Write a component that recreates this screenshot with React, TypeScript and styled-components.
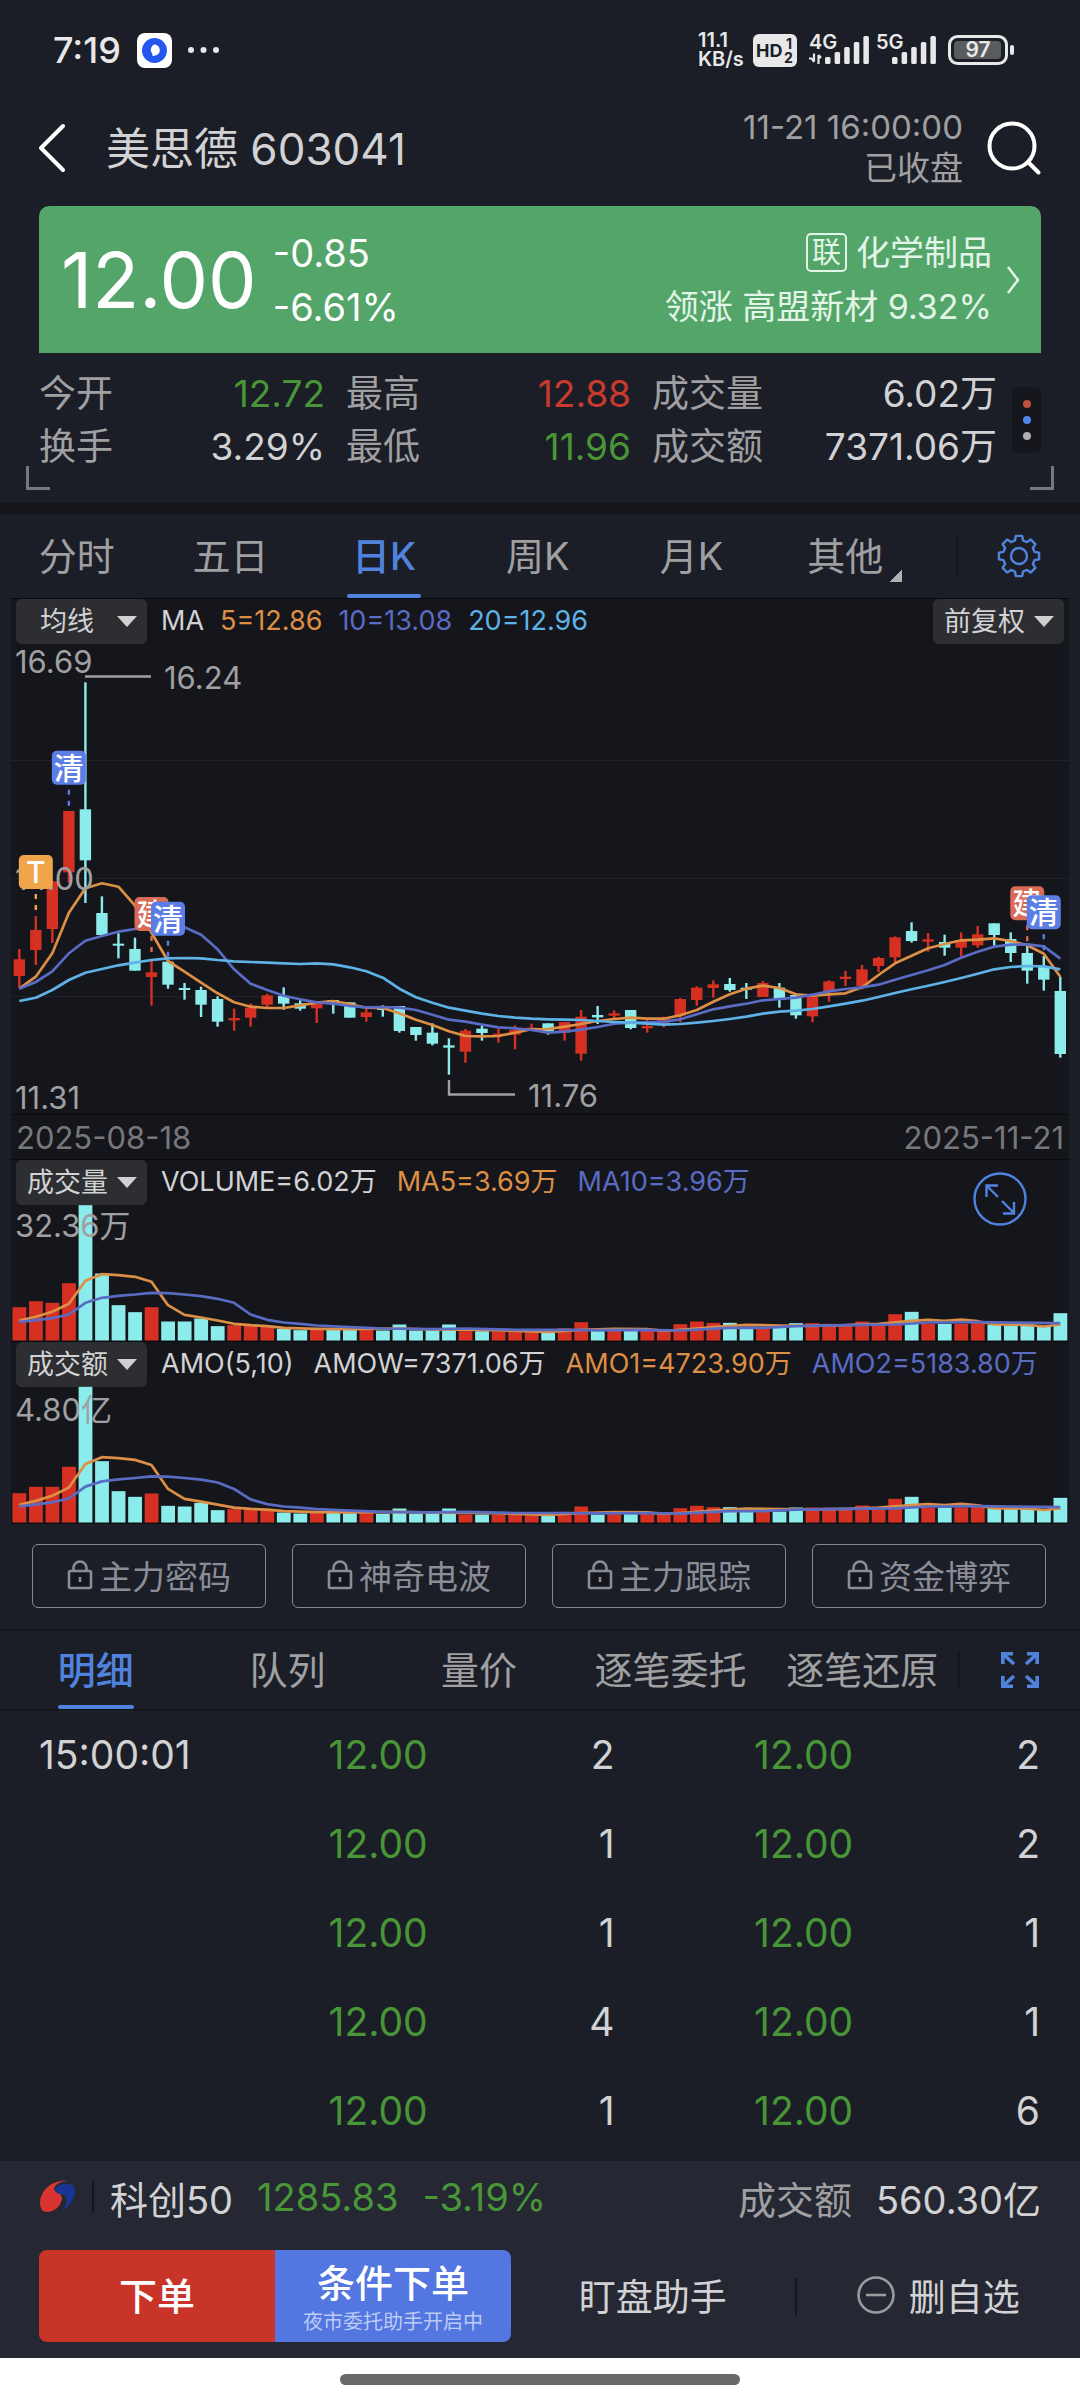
import React from "react";
import styled, { createGlobalStyle } from "styled-components";

const color = {
  page: "#1b1e26",
  panel: "#15161b",
  line: "#121318",
  text: "#d2d2d4",
  label: "#a0a0a3",
  dim: "#77787b",
  green: "#489637",
  red: "#c93a2e",
  blue: "#5083de",
  up: "#d63022",
  down: "#8cecec",
  ma5: "#dd8f45",
  ma10: "#5a6bc4",
  ma20: "#5fb2e6",
};

const fonts = `Inter, "Noto Sans CJK SC", sans-serif`;

const GlobalStyle = createGlobalStyle`
  * { box-sizing: border-box; }
  body { margin: 0; background: ${color.page}; }
  button, select { font: inherit; color: inherit; background: none; border: 0; padding: 0; margin: 0; }
  svg { display: block; flex: none; overflow: visible; }
`;

const Screen = styled.div`
  background: ${color.page};
  color: ${color.text};
  font-family: ${fonts};
  font-size: 37px;
  white-space: nowrap;
`;

/* ---------- status bar ---------- */

const StatusBar = styled.div`
  display: flex;
  align-items: center;
  justify-content: space-between;
  height: 100px;
  padding: 0 65px 0 53px;
  color: #e8e8e8;
`;

const StatusGroup = styled.div<{ $gap: number }>`
  display: flex;
  align-items: center;
  gap: ${(p) => p.$gap}px;
`;

const Clock = styled.span`
  font-size: 36px;
  font-weight: 500;
`;

const NetSpeed = styled.span`
  font-size: 20px;
  line-height: 19px;
  font-weight: 600;
  width: 48px;
`;

/* ---------- header ---------- */

const Header = styled.header`
  display: flex;
  align-items: center;
  height: 106px;
  padding: 0 39px 10px;
`;

const IconButton = styled.button`
  display: flex;
  align-items: center;
  justify-content: center;
  cursor: pointer;
`;

const Title = styled.h1`
  flex: 1;
  margin: 0 0 0 39px;
  padding-bottom: 4px;
  font-size: 44px;
  font-weight: 400;
`;

const MarketState = styled.div`
  margin-right: 24px;
  font-size: 33px;
  line-height: 41px;
  text-align: right;
  color: ${color.label};
`;

/* ---------- quote card ---------- */

const Quote = styled.section`
  display: flex;
  align-items: center;
  height: 147px;
  margin: 0 39px;
  padding: 0 21px 0 22px;
  border-radius: 10px 10px 0 0;
  background: #53a56a;
  color: #fff;
`;

const Price = styled.strong`
  font-size: 77px;
  font-weight: 400;
`;

const Change = styled.div`
  flex: 1;
  margin-left: 16px;
  font-size: 38px;
  line-height: 54px;
`;

const Sector = styled.a`
  display: flex;
  align-items: center;
  gap: 14px;
  color: #e2f5e6;
  text-decoration: none;
`;

const SectorLines = styled.div`
  font-size: 34px;
  line-height: 54px;
  text-align: right;
`;

const SectorTag = styled.span`
  display: inline-block;
  margin-right: 9px;
  padding: 0 4px;
  border: 2px solid #e2f5e6;
  border-radius: 5px;
  font-size: 29px;
  line-height: 35px;
  vertical-align: 2px;
`;

/* ---------- stats ---------- */

const Stats = styled.section`
  position: relative;
  display: flex;
  align-items: center;
  padding: 14px 39px 30px;
`;

const StatGrid = styled.dl`
  flex: 1;
  display: grid;
  grid-template-columns: 286fr 285fr 345fr;
  column-gap: 21px;
  margin: 0 15px 0 0;
  line-height: 53px;
`;

const Stat = styled.div`
  display: flex;
  justify-content: space-between;
`;

const StatLabel = styled.dt`
  color: ${color.label};
`;

const StatValue = styled.dd<{ $color?: string }>`
  margin: 0;
  color: ${(p) => p.$color ?? color.text};
`;

const Dots = styled.button`
  display: flex;
  flex-direction: column;
  align-items: center;
  justify-content: center;
  gap: 8px;
  width: 29px;
  height: 66px;
  border-radius: 6px;
  background: ${color.panel};
`;

const Dot = styled.i<{ $color: string }>`
  width: 8px;
  height: 8px;
  border-radius: 50%;
  background: ${(p) => p.$color};
`;

const Corner = styled.i<{ $side: "left" | "right" }>`
  position: absolute;
  bottom: 13px;
  ${(p) => p.$side}: 26px;
  width: 24px;
  height: 24px;
  border-bottom: 3px solid #76787c;
  border-${(p) => p.$side}: 3px solid #76787c;
`;

const Divider = styled.div`
  height: 11px;
  background: ${color.panel};
`;

/* ---------- tabs ---------- */

const TabBar = styled.nav<{ $height: number; $lined?: boolean }>`
  display: flex;
  height: ${(p) => p.$height}px;
  border: 0 solid ${color.line};
  border-width: ${(p) => (p.$lined ? "1px 0" : "0")};
`;

const Tabs = styled.div<{ $end: number }>`
  flex: 1;
  display: flex;
  padding-right: ${(p) => p.$end}px;
`;

const Tab = styled.button<{ $active?: boolean }>`
  flex: 1 1 0;
  display: flex;
  justify-content: center;
  font-size: 38px;
  font-weight: ${(p) => (p.$active ? 500 : 400)};
  color: ${(p) => (p.$active ? color.blue : color.label)};
  cursor: pointer;
`;

const TabLabel = styled.span<{ $active?: boolean }>`
  position: relative;
  display: flex;
  align-items: center;
  justify-content: center;
  height: 100%;
  min-width: 74px;
  padding-bottom: 5px;
  &::after {
    content: "";
    position: absolute;
    inset: auto 0 0;
    height: 4px;
    border-radius: 2px;
    background: ${(p) => (p.$active ? color.blue : "transparent")};
  }
`;

const MoreMark = styled.i`
  position: absolute;
  left: 100%;
  bottom: 16px;
  margin-left: 6px;
  width: 13px;
  height: 13px;
  background: linear-gradient(135deg, transparent 50%, #b0b0b2 50%);
`;

const TabAction = styled.div`
  display: flex;
  align-items: center;
  gap: 39px;
  padding-right: 39px;
`;

const Rule = styled.i<{ $height: number }>`
  width: 2px;
  height: ${(p) => p.$height}px;
  background: #14161b;
`;

/* ---------- charts ---------- */

const ChartPanel = styled.section`
  margin: 0 11px;
  border-bottom: 1px solid #0e0f12;
  background: ${color.panel};
`;

const Pane = styled.div`
  position: relative;
  border-top: 1px solid #0a0b0d;
`;

const IndicatorBar = styled.div`
  display: flex;
  align-items: center;
  height: 44px;
  padding: 0 5px;
  font-size: 27px;
`;

const Picker = styled.label`
  display: grid;
  align-items: center;
  width: 131px;
  height: 45px;
  border-radius: 6px;
  background: #2d2e32;
  & > * { grid-area: 1 / 1; }
`;

const PickerSelect = styled.select<{ $pad: number }>`
  appearance: none;
  width: 100%;
  height: 45px;
  padding-left: ${(p) => p.$pad}px;
  font-size: 27px;
  outline: none;
`;

const PickerArrow = styled.i<{ $inset: number }>`
  justify-self: end;
  margin-right: ${(p) => p.$inset}px;
  border: 10px solid transparent;
  border-width: 11px 10px 0;
  border-top-color: #d0d0d0;
  pointer-events: none;
`;

const Readings = styled.div<{ $gap: number }>`
  flex: 1;
  display: flex;
  align-items: baseline;
  gap: ${(p) => p.$gap}px;
  margin-left: 14px;
  line-height: 44px;
`;

const Reading = styled.span<{ $color?: string }>`
  color: ${(p) => p.$color ?? color.text};
`;

const Plot = styled.svg`
  width: 100%;
  height: auto;
  font-size: 31px;
  font-family: ${fonts};
`;

const DateRow = styled.div`
  display: flex;
  justify-content: space-between;
  height: 45px;
  padding: 0 5px;
  border-top: 1px solid #0a0b0d;
  font-size: 31px;
  line-height: 46px;
  color: ${color.dim};
`;

const ExpandButton = styled(IconButton)`
  position: absolute;
  top: 12px;
  right: 42px;
`;

/* ---------- locked features ---------- */

const LockedRow = styled.div`
  display: grid;
  grid-template-columns: repeat(4, 1fr);
  gap: 26px;
  padding: 20px 34px 21px 32px;
`;

const LockedButton = styled.button`
  display: flex;
  align-items: center;
  justify-content: center;
  gap: 6px;
  height: 64px;
  padding-bottom: 2px;
  border: 1px solid #868894;
  border-radius: 6px;
  font-size: 33px;
  color: #8a8c98;
`;

/* ---------- trades ---------- */

const Trades = styled.table`
  width: 100%;
  margin-bottom: 6px;
  border-collapse: collapse;
  table-layout: fixed;
  font-size: 39px;
  td {
    height: 89px;
    padding: 0;
    text-align: right;
  }
  td:first-child {
    padding-left: 39px;
    text-align: left;
  }
  td:last-child {
    padding-right: 40px;
  }
`;

const PriceCell = styled.td`
  color: ${color.green};
`;

/* ---------- footer ---------- */

const Footer = styled.footer`
  padding-bottom: 16px;
  background: #252833;
`;

const IndexRow = styled.div`
  display: flex;
  align-items: center;
  gap: 16px;
  height: 74px;
  padding: 0 39px 2px;
  font-size: 38px;
`;

const IndexChange = styled.span`
  margin-left: 8px;
  color: ${color.green};
`;

const Turnover = styled.span`
  margin: 0 8px 0 auto;
  color: ${color.label};
`;

const Actions = styled.div`
  display: flex;
  align-items: center;
  height: 92px;
  margin: 15px 0 0 39px;
`;

const OrderGroup = styled.div`
  display: flex;
  width: 472px;
  height: 92px;
  border-radius: 8px;
  overflow: hidden;
`;

const OrderButton = styled.button<{ $fill: string }>`
  flex: 1;
  background: ${(p) => p.$fill};
  color: #fff;
  font-size: 38px;
  line-height: 52px;
  font-weight: 500;
`;

const OrderNote = styled.small`
  display: block;
  font-size: 20px;
  line-height: 26px;
  font-weight: 400;
  color: #bccbf5;
`;

const FooterButton = styled.button`
  flex: 1 1 0;
  display: flex;
  align-items: center;
  justify-content: center;
  gap: 14px;
  height: 100%;
  padding-bottom: 3px;
  font-size: 37px;
`;

const HomeArea = styled.div`
  display: flex;
  justify-content: center;
  padding: 16px 0 15px;
  background: #fff;
`;

const HomePill = styled.i`
  width: 37%;
  height: 11px;
  border-radius: 6px;
  background: #696969;
`;

/* ---------- data ---------- */

const STEP = 1041 / 63;
const cx = (i: number) => 19.3 + i * STEP;

type Candle = [up: 0 | 1, high: number, top: number, bottom: number, low: number];

const candles: Candle[] = [
  [1, 927, 958, 1008, 1042], [1, 828, 870, 930, 975], [1, 724, 724, 867, 909], [1, 513, 513, 697, 728],
  [0, 127, 508, 661, 789], [0, 769, 819, 885, 885], [0, 880, 911, 917, 955], [0, 893, 927, 992, 992],
  [1, 958, 997, 1011, 1097], [0, 965, 965, 1034, 1046], [0, 1029, 1044, 1050, 1079], [0, 1040, 1050, 1094, 1131],
  [0, 1069, 1077, 1145, 1160], [1, 1106, 1134, 1141, 1172], [1, 1090, 1103, 1133, 1160], [1, 1061, 1066, 1094, 1103],
  [0, 1042, 1068, 1091, 1109], [0, 1080, 1090, 1106, 1112], [1, 1088, 1090, 1105, 1149], [0, 1080, 1080, 1086, 1121],
  [0, 1087, 1087, 1133, 1133], [1, 1105, 1117, 1131, 1145], [0, 1096, 1104, 1110, 1130], [0, 1098, 1098, 1173, 1178],
  [0, 1161, 1161, 1185, 1202], [0, 1150, 1178, 1211, 1216], [0, 1195, 1216, 1223, 1304], [1, 1167, 1172, 1235, 1268],
  [0, 1157, 1166, 1179, 1202], [1, 1166, 1181, 1188, 1208], [1, 1156, 1170, 1184, 1228], [1, 1151, 1163, 1170, 1171],
  [0, 1150, 1150, 1173, 1184], [1, 1146, 1146, 1178, 1202], [1, 1110, 1130, 1241, 1262], [0, 1098, 1125, 1132, 1152],
  [1, 1111, 1120, 1127, 1140], [0, 1110, 1110, 1164, 1168], [1, 1135, 1158, 1165, 1178], [1, 1130, 1133, 1150, 1162],
  [1, 1074, 1077, 1126, 1147], [1, 1039, 1043, 1080, 1097], [1, 1021, 1033, 1044, 1073], [0, 1014, 1032, 1050, 1055],
  [0, 1029, 1043, 1049, 1077], [1, 1023, 1029, 1071, 1071], [0, 1029, 1043, 1080, 1103], [0, 1060, 1065, 1126, 1136],
  [1, 1070, 1070, 1129, 1147], [1, 1021, 1024, 1055, 1085], [1, 993, 1010, 1017, 1038], [1, 975, 988, 1038, 1048],
  [1, 950, 954, 978, 996], [1, 889, 892, 952, 968], [0, 847, 873, 903, 908], [1, 879, 898, 905, 935],
  [0, 884, 906, 923, 947], [1, 877, 900, 923, 950], [1, 858, 883, 916, 923], [0, 850, 850, 885, 917],
  [0, 877, 897, 939, 966], [0, 915, 939, 992, 1031], [0, 948, 981, 1019, 1052], [0, 1010, 1053, 1242, 1253],
];

const ma5 = [
  1046, 1010, 940, 818, 745, 730, 740, 797, 878, 963, 995, 1028, 1060, 1087, 1100, 1104, 1104, 1096, 1088, 1083, 1092,
  1103, 1104, 1120, 1139, 1155, 1174, 1188, 1189, 1188, 1178, 1168, 1167, 1160, 1152, 1143, 1137, 1133, 1136, 1136,
  1126, 1110, 1085, 1063, 1046, 1037, 1044, 1063, 1067, 1063, 1060, 1042, 1005, 970, 947, 925, 912, 901, 899, 895, 903,
  916, 941, 1010,
];
const ma10 = [
  1046, 1026, 994, 940, 902, 888, 875, 867, 855, 850, 862, 884, 928, 988, 1031, 1050, 1067, 1078, 1087, 1091, 1098,
  1102, 1101, 1103, 1110, 1124, 1139, 1145, 1154, 1162, 1165, 1170, 1178, 1175, 1169, 1161, 1151, 1148, 1147, 1145,
  1138, 1123, 1108, 1099, 1091, 1081, 1077, 1073, 1064, 1054, 1047, 1042, 1034, 1019, 1005, 991, 975, 953, 935, 920,
  914, 913, 919, 956,
];
const ma20 = [
  1083, 1073, 1050, 1020, 998, 987, 976, 968, 960, 955, 954, 955, 960, 964, 966, 968, 970, 972, 970, 973, 982, 994,
  1013, 1046, 1072, 1088, 1103, 1112, 1121, 1128, 1133, 1136, 1138, 1139, 1140, 1143, 1146, 1148, 1151, 1154, 1152,
  1148, 1143, 1137, 1130, 1121, 1115, 1112, 1107, 1099, 1091, 1082, 1071, 1059, 1048, 1037, 1026, 1014, 1001, 988, 981,
  978, 979, 988,
];

/* Bar heights in thirds of a pixel, measured from the base line. */
const volume = [
  100, 118, 113, 172, 406, 201, 106, 85, 100, 57, 57, 66, 43, 46, 45, 43, 35, 31, 35, 34, 32, 33, 30, 48, 30, 31, 48,
  28, 28, 27, 27, 25, 24, 37, 55, 28, 31, 29, 31, 33, 49, 57, 53, 53, 41, 38, 38, 52, 52, 50, 46, 57, 49, 79, 86, 50,
  50, 50, 53, 47, 45, 45, 44, 82,
];
const amount = volume.map((v, i) =>
  i < 13 ? [88, 107, 107, 167, 407, 184, 94, 77, 87, 50, 48, 59, 37][i] : Math.round(i > 50 ? v * 0.9 : v * 0.87)
);

type Point = [i: number, height: number];
const volumeMa5: Point[] = [
  [0, 60], [1, 71], [2, 86], [3, 110], [4, 179], [5, 199], [6, 196], [7, 191], [8, 176], [9, 106], [10, 77], [11, 69],
  [12, 60], [13, 50], [14, 46], [15, 43], [16, 38], [18, 35], [20, 34], [23, 36], [25, 33], [28, 32], [30, 29],
  [32, 26], [34, 32], [36, 35], [38, 34], [39, 29], [40, 32], [42, 40], [44, 47], [46, 45], [48, 44], [50, 46],
  [52, 50], [54, 59], [55, 62], [56, 59], [57, 63], [58, 58], [59, 48], [61, 47], [62, 42], [63, 48],
];
const volumeMa10: Point[] = [
  [0, 55], [1, 61], [2, 67], [3, 78], [4, 113], [5, 128], [6, 134], [7, 138], [8, 143], [9, 142], [10, 138], [11, 133],
  [12, 125], [13, 113], [14, 78], [15, 62], [16, 54], [17, 50], [18, 45], [20, 40], [22, 36], [25, 34], [27, 36],
  [30, 32], [33, 32], [35, 31], [38, 32], [40, 30], [43, 38], [45, 38], [47, 43], [50, 46], [53, 48], [55, 54],
  [58, 55], [60, 54], [63, 52],
];
const scaled = (points: Point[]): Point[] => points.map(([i, h]) => [i, i < 13 ? h - 8 + h / 40 : h * 0.89]);

const trades = [
  ["15:00:01", "12.00", "2", "12.00", "2"],
  ["", "12.00", "1", "12.00", "2"],
  ["", "12.00", "1", "12.00", "1"],
  ["", "12.00", "4", "12.00", "1"],
  ["", "12.00", "1", "12.00", "6"],
];

const marks = [
  { i: 1, y: 645, stem: 812, text: "T", fill: "#f0a54a" },
  { i: 3, y: 332, stem: 498, text: "清", fill: "#5b7de6" },
  { i: 8, y: 771, stem: 940, text: "建", fill: "#d96a55" },
  { i: 9, y: 785, stem: 952, text: "清", fill: "#5b7de6" },
  { i: 61, y: 739, stem: 908, text: "建", fill: "#d96a55" },
  { i: 62, y: 766, stem: 935, text: "清", fill: "#5b7de6" },
];

/* ---------- drawings ---------- */

const py = (v: number) => v / 3 - 3;

const path = (points: Point[], y: (h: number) => number) =>
  points.map(([i, h]) => `${cx(i).toFixed(1)},${y(h).toFixed(1)}`).join(" ");

const series = (values: number[]) => path(values.map((v, i): Point => [i, v]), py);

function Line({ points, stroke }: { points: string; stroke: string }) {
  return <polyline points={points} fill="none" stroke={stroke} strokeWidth={2.7} strokeLinejoin="round" />;
}

function PriceChart() {
  return (
    <Plot viewBox="11 0 1058 471" role="img" aria-label="日K">
      {[117.5, 235.5, 353.5].map((y) => (
        <line key={y} x1={11} x2={1069} y1={y} y2={y} stroke="#202227" />
      ))}
      {candles.map(([up, high, top, bottom, low], i) => (
        <g key={i} fill={up ? color.up : color.down}>
          <rect x={cx(i) - 1.2} y={py(high)} width={2.4} height={(low - high) / 3} />
          <rect x={cx(i) - 5.7} y={py(top)} width={11.4} height={(bottom - top) / 3} />
        </g>
      ))}
      <Line points={series(ma5)} stroke={color.ma5} />
      <Line points={series(ma10)} stroke={color.ma10} />
      <Line points={series(ma20)} stroke={color.ma20} />
      <g fill={color.label}>
        <text x={15} y={30}>16.69</text>
        <text x={15} y={247}>14.00</text>
        <text x={15} y={466}>11.31</text>
        <text x={164} y={46}>16.24</text>
        <text x={528} y={464}>11.76</text>
      </g>
      <path d="M85 33.5H151M449 437V451.5H515" fill="none" stroke={color.label} strokeWidth={2.4} />
      {marks.map((m) => (
        <g key={m.i}>
          <line
            x1={cx(m.i)} x2={cx(m.i)} y1={py(m.y) + 39} y2={py(m.stem)}
            stroke={m.fill} strokeWidth={2.4} strokeDasharray="5 6"
          />
          <rect x={cx(m.i) - 17} y={py(m.y)} width={34} height={34} rx={5} fill={m.fill} />
          <text x={cx(m.i)} y={py(m.y) + 28} fontSize={30} fontWeight={500} fill="#fff" textAnchor="middle">
            {m.text}
          </text>
        </g>
      ))}
    </Plot>
  );
}

function BarChart({ bars, fast, slow, peak, peakY, name }: {
  bars: number[]; fast: Point[]; slow: Point[]; peak: string; peakY: number; name: string;
}) {
  const y = (h: number) => 136.5 - h / 3;
  return (
    <Plot viewBox="11 0 1058 137" role="img" aria-label={name}>
      {bars.map((h, i) => (
        <rect
          key={i} x={cx(i) - 6.8} y={y(h)} width={13.8} height={h / 3}
          fill={candles[i][0] ? color.up : color.down}
        />
      ))}
      <Line points={path(fast, y)} stroke={color.ma5} />
      <Line points={path(slow, y)} stroke={color.ma10} />
      <text x={15} y={peakY} fill={color.label}>{peak}</text>
    </Plot>
  );
}

function Signal({ name, data }: { name: string; data?: boolean }) {
  return (
    <svg width="60" height="34" viewBox="0 0 60 34" fill="#e8e8e8">
      <text x="0" y="16" fontSize="20" fontWeight="600" fontFamily="Inter, sans-serif">{name}</text>
      {[7, 12, 17, 22, 28].map((h, i) => (
        <rect key={h} x={16 + i * 9.6} y={31 - h} width="5.5" height={h} rx="1.5" />
      ))}
      {data && <path d="M0 25.500h3.500M5 20.500v8M3 26l2 3M9.500 31v-9M9.500 22l2.500 3" stroke="#e8e8e8" strokeWidth="2.200" fill="none" />}
    </svg>
  );
}

function Lock() {
  return (
    <svg width="26" height="32" viewBox="0 0 26 32" fill="none" stroke="#8a8c98" strokeWidth="2.6">
      <rect x="2" y="12" width="22" height="17" rx="1.5" fill={color.panel} />
      <path d="M6.5 12V9a6.5 6.5 0 0 1 13 0v3M13 18v5" />
    </svg>
  );
}

function Gear() {
  const points: string[] = [];
  for (let k = 0; k < 8; k++) {
    const at = (deg: number, r: number) => {
      const a = ((k * 45 + deg) * Math.PI) / 180;
      return `${(22 + r * Math.sin(a)).toFixed(1)} ${(22 - r * Math.cos(a)).toFixed(1)}`;
    };
    points.push(at(-9, 20.3), at(9, 20.3), at(15, 16), at(30, 16));
  }
  return (
    <svg width="44" height="44" viewBox="0 0 44 44" fill="none" stroke={color.blue} strokeWidth="2.4" strokeLinejoin="round">
      <path d={`M${points.join("L")}Z`} />
      <circle cx="22" cy="22" r="8" />
    </svg>
  );
}

function Choice({ label, value, pad = 11, inset = 10 }: { label: string; value: string; pad?: number; inset?: number }) {
  return (
    <Picker>
      <PickerSelect aria-label={label} $pad={pad} defaultValue={value}>
        <option>{value}</option>
      </PickerSelect>
      <PickerArrow $inset={inset} />
    </Picker>
  );
}

const stats: [string, string, string?][] = [
  ["今开", "12.72", color.green],
  ["最高", "12.88", color.red],
  ["成交量", "6.02万"],
  ["换手", "3.29%"],
  ["最低", "11.96", color.green],
  ["成交额", "7371.06万"],
];

export default function App() {
  return (
    <Screen>
      <GlobalStyle />
      <StatusBar>
        <StatusGroup $gap={16}>
          <Clock>7:19</Clock>
          <svg width="35" height="35" viewBox="0 0 35 35">
            <rect width="35" height="35" rx="8" fill="#fff" />
            <circle cx="17.5" cy="17.5" r="12.5" fill="#2457ee" />
            <path d="M17.5 11.5a5.6 5.6 0 1 1-.6 11.2c-.6.6-1.600.6-1.600-.6v-1.500a5.600 5.600 0 0 1 2.200-9.100z" fill="#fff" />
          </svg>
          <svg width="32" height="6" viewBox="0 0 32 6" fill="#e8e8e8">
            <circle cx="3" cy="3" r="3" />
            <circle cx="15.5" cy="3" r="3" />
            <circle cx="28" cy="3" r="3" />
          </svg>
        </StatusGroup>
        <StatusGroup $gap={12}>
          <StatusGroup $gap={7}>
            <NetSpeed>11.1<br />KB/s</NetSpeed>
            <svg width="44" height="33" viewBox="0 0 44 33" fontFamily="Inter, sans-serif" fontWeight="700" fill="#1b1e26">
              <rect width="44" height="33" rx="6" fill="#e8e8e8" />
              <text x="3" y="23" fontSize="18">HD</text>
              <text x="33" y="15" fontSize="14">1</text>
              <text x="31" y="29" fontSize="14">2</text>
            </svg>
          </StatusGroup>
          <StatusGroup $gap={7}>
            <Signal name="4G" data />
            <Signal name="5G" />
          </StatusGroup>
          <svg width="67" height="30" viewBox="0 0 67 30">
            <rect x="1.5" y="1.5" width="57" height="27" rx="8" fill="none" stroke="#e8e8e8" strokeWidth="3" />
            <rect x="6" y="6" width="47" height="18" rx="4" fill="#5a5b5f" />
            <rect x="62" y="10" width="4" height="10" rx="2" fill="#e8e8e8" />
            <text x="30" y="22" fontSize="21" fontWeight="600" fontFamily="Inter, sans-serif" fill="#e8e8e8" textAnchor="middle">97</text>
          </svg>
        </StatusGroup>
      </StatusBar>

      <Header>
        <IconButton aria-label="返回">
          <svg width="28" height="50" viewBox="0 0 28 50" fill="none" stroke="#fff" strokeWidth="4" strokeLinecap="round" strokeLinejoin="round">
            <path d="M24 3L2 25l22 22" />
          </svg>
        </IconButton>
        <Title>美思德 603041</Title>
        <MarketState>11-21 16:00:00<br />已收盘</MarketState>
        <IconButton aria-label="搜索">
          <svg width="54" height="54" viewBox="0 0 54 54" fill="none" stroke="#fff" strokeWidth="4" strokeLinecap="round">
            <circle cx="25" cy="25" r="22.5" />
            <path d="M41 41l10.500 10.500" />
          </svg>
        </IconButton>
      </Header>

      <Quote>
        <Price>12.00</Price>
        <Change>-0.85<br />-6.61%</Change>
        <Sector href="#sector">
          <SectorLines>
            <SectorTag>联</SectorTag>化学制品<br />领涨 高盟新材 9.32%
          </SectorLines>
          <svg width="14" height="28" viewBox="0 0 14 28" fill="none" stroke="#e2f5e6" strokeWidth="2.5">
            <path d="M2 1l10 13L2 27" />
          </svg>
        </Sector>
      </Quote>

      <Stats>
        <StatGrid>
          {stats.map(([label, value, tint]) => (
            <Stat key={label}>
              <StatLabel>{label}</StatLabel>
              <StatValue $color={tint}>{value}</StatValue>
            </Stat>
          ))}
        </StatGrid>
        <Dots aria-label="更多数据">
          <Dot $color="#c0503c" />
          <Dot $color="#4f86ec" />
          <Dot $color="#b0b0b2" />
        </Dots>
        <Corner $side="left" />
        <Corner $side="right" />
      </Stats>
      <Divider />

      <TabBar $height={84}>
        <Tabs $end={34}>
          {["分时", "五日", "日K", "周K", "月K", "其他"].map((name) => (
            <Tab key={name} $active={name === "日K"}>
              <TabLabel $active={name === "日K"}>
                {name}
                {name === "其他" && <MoreMark />}
              </TabLabel>
            </Tab>
          ))}
        </Tabs>
        <TabAction>
          <Rule $height={38} />
          <IconButton aria-label="设置"><Gear /></IconButton>
        </TabAction>
      </TabBar>

      <ChartPanel>
        <Pane>
          <IndicatorBar>
            <Choice label="主图指标" value="均线" pad={24} />
            <Readings $gap={16}>
              <Reading>MA</Reading>
              <Reading $color={color.ma5}>5=12.86</Reading>
              <Reading $color={color.ma10}>10=13.08</Reading>
              <Reading $color={color.ma20}>20=12.96</Reading>
            </Readings>
            <Choice label="复权方式" value="前复权" />
          </IndicatorBar>
          <PriceChart />
        </Pane>
        <DateRow>
          <time>2025-08-18</time>
          <time>2025-11-21</time>
        </DateRow>
        <Pane>
          <IndicatorBar>
            <Choice label="副图指标一" value="成交量" />
            <Readings $gap={20}>
              <Reading>VOLUME=6.02万</Reading>
              <Reading $color={color.ma5}>MA5=3.69万</Reading>
              <Reading $color={color.ma10}>MA10=3.96万</Reading>
            </Readings>
          </IndicatorBar>
          <BarChart bars={volume} fast={volumeMa5} slow={volumeMa10} peak="32.36万" peakY={33} name="成交量" />
          <ExpandButton aria-label="全屏">
            <svg width="54" height="54" viewBox="0 0 54 54" fill="none" stroke={color.blue} strokeWidth="2.4">
              <circle cx="27" cy="27" r="25.5" />
              <path d="M25 25L14 14M13.5 25V13.5H25M29 29l12 12M41 30v11.5H30" />
            </svg>
          </ExpandButton>
        </Pane>
        <Pane>
          <IndicatorBar>
            <Choice label="副图指标二" value="成交额" />
            <Readings $gap={20}>
              <Reading>AMO(5,10)</Reading>
              <Reading>AMOW=7371.06万</Reading>
              <Reading $color={color.ma5}>AMO1=4723.90万</Reading>
              <Reading $color={color.ma10}>AMO2=5183.80万</Reading>
            </Readings>
          </IndicatorBar>
          <BarChart bars={amount} fast={scaled(volumeMa5)} slow={scaled(volumeMa10)} peak="4.80亿" peakY={35} name="成交额" />
        </Pane>
      </ChartPanel>

      <LockedRow>
        {["主力密码", "神奇电波", "主力跟踪", "资金博弈"].map((name) => (
          <LockedButton key={name}><Lock />{name}</LockedButton>
        ))}
      </LockedRow>

      <TabBar $height={81} $lined>
        <Tabs $end={0}>
          {["明细", "队列", "量价", "逐笔委托", "逐笔还原"].map((name) => (
            <Tab key={name} $active={name === "明细"}>
              <TabLabel $active={name === "明细"}>{name}</TabLabel>
            </Tab>
          ))}
        </Tabs>
        <TabAction>
          <Rule $height={38} />
          <IconButton aria-label="展开">
            <svg width="42" height="38" viewBox="0 0 42 38" fill="none" stroke={color.blue} strokeWidth="3.6">
              <path d="M3.8 13V2.8H14M4 3l11 10M28 2.8h10.2V13M38 3L27 13M3.8 25v10.2H14M4 35l11-10M28 35.2h10.2V25M38 35L27 25" />
            </svg>
          </IconButton>
        </TabAction>
      </TabBar>

      <Trades>
        <colgroup>
          <col style={{ width: "18.7%" }} />
          <col style={{ width: "20.9%" }} />
          <col style={{ width: "17.3%" }} />
          <col style={{ width: "22.1%" }} />
          <col />
        </colgroup>
        <tbody>
          {trades.map(([time, p1, v1, p2, v2], i) => (
            <tr key={i}>
              <td>{time}</td>
              <PriceCell>{p1}</PriceCell>
              <td>{v1}</td>
              <PriceCell>{p2}</PriceCell>
              <td>{v2}</td>
            </tr>
          ))}
        </tbody>
      </Trades>

      <Footer>
        <IndexRow>
          <svg width="37" height="36" viewBox="0 0 37 36">
            <path d="M1 23C2 10 15 0 29 2c-7 0-13 3-14 8 0 4 8 2 8 10-1 7-8 13-15 13-5 0-7-4-7-10z" fill="#d93430" />
            <path d="M29 2c-6 1-12 4-13 8 2-3 8-6 13-5 5 0 8 4 7 10-2 8-9 15-13 17 5-5 6-13 2-16-4-2-9 0-9-6C17 6 23 2 29 2z" fill="#183593" />
          </svg>
          <Rule $height={32} />
          <span>科创50</span>
          <IndexChange>1285.83</IndexChange>
          <IndexChange>-3.19%</IndexChange>
          <Turnover>成交额</Turnover>
          <span>560.30亿</span>
        </IndexRow>
        <Actions>
          <OrderGroup>
            <OrderButton $fill="#c93429">下单</OrderButton>
            <OrderButton $fill="#5376e0">
              条件下单
              <OrderNote>夜市委托助手开启中</OrderNote>
            </OrderButton>
          </OrderGroup>
          <FooterButton>盯盘助手</FooterButton>
          <Rule $height={37} />
          <FooterButton>
            <svg width="38" height="38" viewBox="0 0 38 38" fill="none" stroke="#9a9b9f" strokeWidth="2.6">
              <circle cx="19" cy="19" r="17.5" />
              <path d="M9 19h20" />
            </svg>
            删自选
          </FooterButton>
        </Actions>
      </Footer>
      <HomeArea><HomePill /></HomeArea>
    </Screen>
  );
}
